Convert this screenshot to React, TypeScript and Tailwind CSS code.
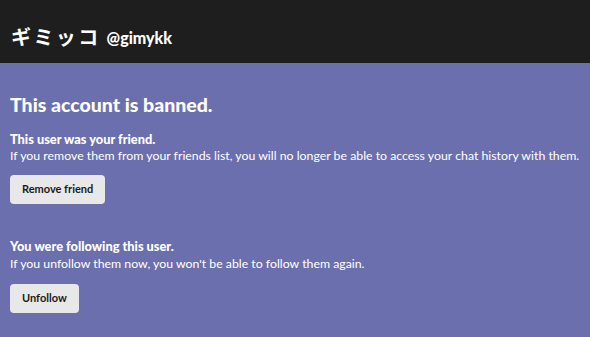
export default function App() {
  return (
    <div
      className="w-[590px] h-[337px] overflow-hidden bg-[#6c6fae] text-white"
      style={{ fontFamily: "Lato, 'Noto Sans CJK JP', sans-serif" }}
    >
      {/* ── Header ─────────────────────────────────────────────── */}
      <header className="h-[63px] bg-[#1e1e1e] flex items-end pb-[16px] pl-[11px] gap-[6px]">
        <span className="text-[20px] font-bold leading-none tracking-[0.12em]">
          ギミッコ
        </span>
        <span className="text-[16px] font-black leading-none mb-[1px]">@gimykk</span>
      </header>

      {/* ── Content ────────────────────────────────────────────── */}
      <main className="px-[10px] pt-[29px]">
        <h1 className="text-[19.5px] font-black leading-[26px]">This account is banned.</h1>

        <section className="mt-[13px]">
          <div className="text-[12.8px] font-black leading-[16px]">This user was your friend.</div>
          <p className="text-[12.3px] leading-[18px]">
            If you remove them from your friends list, you will no longer be able to access your
            chat history with them.
          </p>
          <button className="mt-[10px] h-[29px] px-[12px] rounded-[4px] bg-[#e8e8e8] text-[#1a1a1a] text-[11px] font-bold">
            Remove friend
          </button>
        </section>

        <section className="mt-[34px]">
          <div className="text-[12.8px] font-black leading-[16px]">You were following this user.</div>
          <p className="text-[12.3px] leading-[18px] mt-[1px]">
            If you unfollow them now, you won't be able to follow them again.
          </p>
          <button className="mt-[11px] h-[29px] px-[12px] rounded-[4px] bg-[#e8e8e8] text-[#1a1a1a] text-[11px] font-bold">
            Unfollow
          </button>
        </section>
      </main>
    </div>
  );
}
